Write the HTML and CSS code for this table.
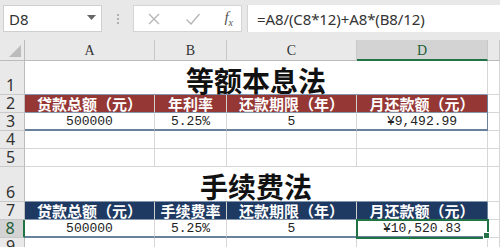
FILE: index.html
```html
<!DOCTYPE html>
<html>
<head>
  <meta charset="utf-8">
  <title>贷款计算</title>
  <link rel="stylesheet" href="styles.css">
</head>
<body>
  <div class="toolbar">
    <div class="namebox">
      <span>D8</span>
      <svg class="drop" width="9" height="5" viewBox="0 0 9 5"><path d="M0 0h9L4.5 5z" fill="#666"/></svg>
    </div>
    <div class="grip"><i></i><i></i><i></i></div>
    <div class="fxbtns">
      <svg width="14" height="14" viewBox="0 0 14 14"><path d="M2 2l10 10M12 2L2 12" stroke="#b4b4b4" stroke-width="1.3" fill="none"/></svg>
      <svg width="16" height="14" viewBox="0 0 16 14"><path d="M1.5 7.5l4.5 4.5L14.5 2" stroke="#b4b4b4" stroke-width="1.3" fill="none"/></svg>
      <span class="fx">f<sub>x</sub></span>
    </div>
    <div class="formula">=A8/(C8*12)+A8*(B8/12)</div>
  </div>

  <div class="sheet">
    <div class="corner"><svg width="12" height="12" viewBox="0 0 12 12"><path d="M12 0v12H0z" fill="#bcbcbc"/></svg></div>
    <div class="ch">A</div>
    <div class="ch">B</div>
    <div class="ch">C</div>
    <div class="ch sel">D</div>
    <div class="ch"></div>

    <div class="rh">1</div>
    <div class="c title">等额本息法</div>
    <div class="c"></div>

    <div class="rh">2</div>
    <div class="c hd red">贷款总额（元）</div>
    <div class="c hd red">年利率</div>
    <div class="c hd red">还款期限（年）</div>
    <div class="c hd red last">月还款额（元）</div>
    <div class="c"></div>

    <div class="rh">3</div>
    <div class="c num end">500000</div>
    <div class="c num end">5.25%</div>
    <div class="c num end">5</div>
    <div class="c num end last">¥9,492.99</div>
    <div class="c"></div>

    <div class="rh">4</div>
    <div class="c"></div><div class="c"></div><div class="c"></div><div class="c"></div><div class="c"></div>

    <div class="rh">5</div>
    <div class="c"></div><div class="c"></div><div class="c"></div><div class="c"></div><div class="c"></div>

    <div class="rh">6</div>
    <div class="c title">手续费法</div>
    <div class="c"></div>

    <div class="rh">7</div>
    <div class="c hd navy">贷款总额（元）</div>
    <div class="c hd navy">手续费率</div>
    <div class="c hd navy">还款期限（年）</div>
    <div class="c hd navy last">月还款额（元）</div>
    <div class="c"></div>

    <div class="rh sel">8</div>
    <div class="c num end">500000</div>
    <div class="c num end">5.25%</div>
    <div class="c num end">5</div>
    <div class="c num end last active">¥10,520.83</div>
    <div class="c"></div>

    <div class="rh">9</div>
    <div class="c"></div><div class="c"></div><div class="c"></div><div class="c"></div><div class="c"></div>
  </div>
</body>
</html>
```

FILE: styles.css
```css
html,
body {
  margin: 0;
  height: 100%;
  overflow: hidden;
  background: #e8e8e8;
  font-family: "Noto Sans", "Noto Sans CJK SC", sans-serif;
}

/* formula bar */
.toolbar {
  height: 40px;
  box-sizing: border-box;
  padding: 5px 0 8px 3px;
  display: flex;
  align-items: stretch;
}

.namebox {
  width: 99px;
  box-sizing: border-box;
  background: #fff;
  border: 1px solid #cfcfcf;
  display: flex;
  align-items: center;
  justify-content: space-between;
  padding: 0 5px 0 5px;
  font-size: 15px;
  color: #333;
}

.drop {
  margin-top: -2px;
}

.grip {
  width: 31px;
  display: flex;
  flex-direction: column;
  align-items: center;
  justify-content: center;
  gap: 2px;
}

.grip i {
  width: 2px;
  height: 2px;
  background: #b0b0b0;
}

.fxbtns {
  width: 109px;
  box-sizing: border-box;
  background: #fff;
  border: 1px solid #d4d4d4;
  display: flex;
  align-items: center;
  justify-content: space-between;
  padding: 0 8px 0 13px;
}

.fx {
  font-family: "Liberation Serif", serif;
  font-style: italic;
  font-size: 15px;
  color: #555;
}

.fx sub {
  font-size: 10px;
}

.formula {
  flex: 1;
  margin-left: 5px;
  background: #fff;
  border-left: 1px solid #d4d4d4;
  display: flex;
  align-items: center;
  padding-left: 9px;
  font-size: 15px;
  letter-spacing: -0.1px;
  color: #333;
}

/* worksheet */
.sheet {
  display: grid;
  grid-template-columns: 25px 130px 72px 130px 131px 1fr;
  grid-template-rows: 21px 34px 18px 18px 18px 18px 35px 18px 18px 18px;
  background: #fff;
}

.sheet > div {
  box-sizing: border-box;
  display: flex;
  align-items: center;
  justify-content: center;
  min-width: 0;
  white-space: nowrap;
  line-height: 1;
}

.corner {
  background: #e9e9e9;
  border-right: 1px solid #bcbcbc;
  border-bottom: 1px solid #bcbcbc;
  align-items: flex-end !important;
  justify-content: flex-end !important;
  padding: 0 3px 3px 0;
}

.ch {
  background: #e9e9e9;
  border-right: 1px solid #c8c8c8;
  border-bottom: 1px solid #bcbcbc;
  font-family: "Liberation Serif", serif;
  font-size: 14px;
  color: #333;
  padding-top: 2px;
}

.ch.sel {
  background: #d3d3d3;
  border-bottom: 2px solid #217346;
  color: #1d5e38;
}

.rh {
  background: #e9e9e9;
  border-right: 1px solid #bcbcbc;
  border-bottom: 1px solid #c8c8c8;
  font-size: 16px;
  color: #333;
  align-items: flex-end !important;
  padding: 0 3px 1px 0;
}

.rh.sel {
  background: #d3d3d3;
  border-right: 2px solid #217346;
  color: #1d5e38;
}

.c {
  border-right: 1px solid #d6d6d6;
  border-bottom: 1px solid #d6d6d6;
}

.title {
  grid-column: span 4;
  border-bottom-color: #8396ad;
  font-family: "Noto Sans CJK SC", sans-serif;
  font-weight: 700;
  font-size: 28px;
  color: #111;
  padding-top: 4px;
}

.hd {
  font-family: "Noto Sans CJK SC", sans-serif;
  font-weight: 700;
  font-size: 15px;
  color: #fff;
  border-right-color: #cfcfcf;
  border-bottom-color: #8396ad;
}

.red {
  background: #953735;
}

.navy {
  background: #1f3a62;
}

.num {
  font-family: "Liberation Mono", monospace;
  font-size: 13px;
  color: #222;
}

.end {
  border-bottom: 2px solid #6a819c;
}

.last {
  border-right-color: #6a819c;
}

/* active cell with its fill handle */
.active {
  position: relative;
  outline: 2px solid #217346;
  outline-offset: -1px;
}

.active::after {
  content: '';
  position: absolute;
  right: -3px;
  bottom: -3px;
  width: 5px;
  height: 5px;
  background: #217346;
  border: 1px solid #fff;
}
```
